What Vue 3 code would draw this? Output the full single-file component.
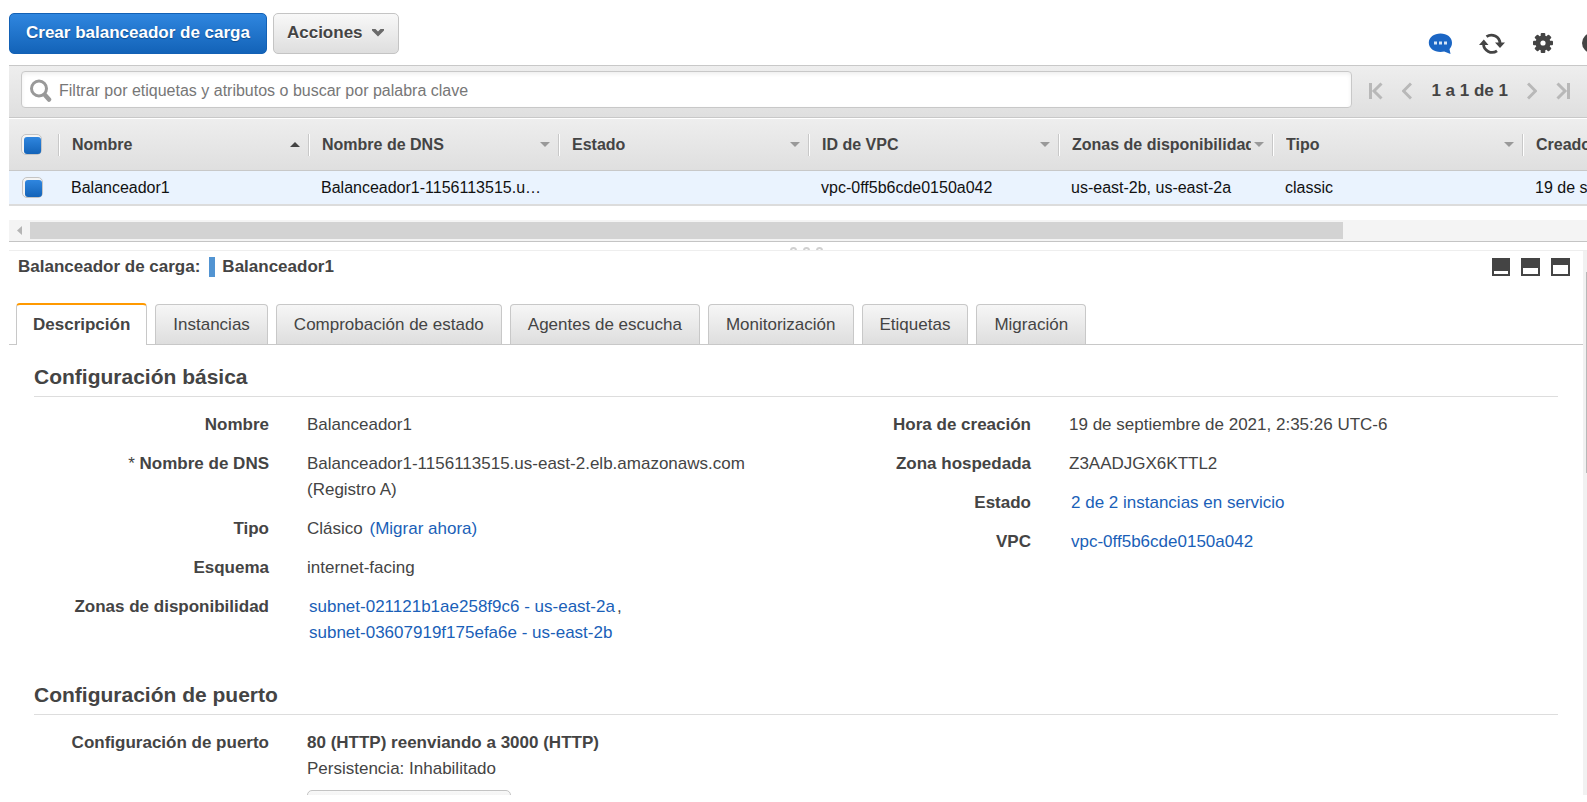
<script setup>
import { ref } from 'vue'

const filter = ref('')
const allSelected = ref(true)
const rowSelected = ref(true)

const columns = [
  { name: 'Nombre', cls: 'c-std', sort: 'up' },
  { name: 'Nombre de DNS', cls: 'c-std', sort: 'down' },
  { name: 'Estado', cls: 'c-std', sort: 'down' },
  { name: 'ID de VPC', cls: 'c-std', sort: 'down' },
  { name: 'Zonas de disponibilidad', cls: 'c-zone', sort: 'down' },
  { name: 'Tipo', cls: 'c-std', sort: 'down' },
  { name: 'Creado', cls: 'c-std', sort: '' },
]
const cells = [
  'Balanceador1',
  'Balanceador1-1156113515.us-east-2.elb.amazonaws.com',
  '',
  'vpc-0ff5b6cde0150a042',
  'us-east-2b, us-east-2a',
  'classic',
  '19 de septiembre de 2021, 2:35:26 UTC-6',
]
const tabs = ['Descripción', 'Instancias', 'Comprobación de estado', 'Agentes de escucha', 'Monitorización', 'Etiquetas', 'Migración']
const active = ref('Descripción')
const teeth = [0, 45, 90, 135]
</script>

<template>
  <div class="page">
    <header class="actions">
      <button class="btn primary" type="button">Crear balanceador de carga</button>
      <button class="btn" type="button">
        Acciones
        <svg width="14" height="10" viewBox="0 0 14 10" aria-hidden="true"><path d="M1 1h3.500L7 3.500 9.500 1H13v1.600L7 8.500 1 2.600z" fill="#6a6a6a" /></svg>
      </button>
      <div class="tools">
        <button type="button" class="icon" aria-label="Comentarios">
          <svg width="26" height="24" viewBox="0 0 26 24">
            <path d="M12.500 1.500C19 1.500 24 5.300 24 10.800c0 2.700-1 4.600-2.500 6.100L22.500 22l-6.300-2.400c-1.200.3-2.400.4-3.700.4C6 20 .8 16.300.8 10.800S6 1.500 12.500 1.500z" fill="#1b66c4" />
            <path d="M6 9.500h3v3H6zM11 9.500h3v3h-3zM16 9.500h3v3h-3z" fill="#d6e5f7" />
          </svg>
        </button>
        <button type="button" class="icon" aria-label="Actualizar">
          <svg width="26" height="24" viewBox="0 0 26 24" fill="none" stroke="#444" stroke-width="2.800">
            <path d="M7.500 4.700A8.600 8.600 0 0 1 21 11.500M18 18.800A8.600 8.600 0 0 1 4.500 12" />
            <path d="M16 10.500h10L21 16zM0 13h9.500L4.800 7.500z" fill="#444" stroke="none" />
          </svg>
        </button>
        <button type="button" class="icon" aria-label="Configuración">
          <svg width="26" height="24" viewBox="-13 -11 26 24">
            <rect v-for="t in teeth" :key="t" x="-2.300" y="-10" width="4.600" height="20" rx="1" fill="#444" :transform="`rotate(${t})`" />
            <circle r="5" fill="none" stroke="#444" stroke-width="5" />
            <circle r="2.600" fill="#fff" />
          </svg>
        </button>
        <button type="button" class="icon" aria-label="Ayuda">
          <svg width="26" height="24" viewBox="0 0 26 24"><circle cx="11" cy="11" r="10" fill="#444" /></svg>
        </button>
      </div>
    </header>

    <div class="filterbar">
      <label class="search">
        <svg width="22" height="24" viewBox="0 0 22 24" fill="none" stroke="#999" aria-hidden="true">
          <circle cx="9" cy="10.500" r="7.500" stroke-width="3" />
          <path d="M15 17l4 4.500" stroke-width="4.500" stroke-linecap="round" />
        </svg>
        <input v-model="filter" type="text" placeholder="Filtrar por etiquetas y atributos o buscar por palabra clave" aria-label="Filtrar" />
      </label>
      <nav class="pager" aria-label="Paginación">
        <button type="button" aria-label="Primera"><svg width="14" height="18" viewBox="0 0 14 18"><path d="M1.500 1v16M12.500 1.500L5 9l7.500 7.500" /></svg></button>
        <button type="button" aria-label="Anterior"><svg width="10" height="18" viewBox="0 0 10 18"><path d="M9 1.500L1.500 9 9 16.500" /></svg></button>
        <span>1 a 1 de 1</span>
        <button type="button" aria-label="Siguiente"><svg width="10" height="18" viewBox="0 0 10 18"><path d="M1 1.500L8.500 9 1 16.500" /></svg></button>
        <button type="button" aria-label="Última"><svg width="14" height="18" viewBox="0 0 14 18"><path d="M12.500 1v16M1.500 1.500L9 9l-7.500 7.500" /></svg></button>
      </nav>
    </div>

    <div class="grid">
      <table>
        <colgroup>
          <col class="c-check" />
          <col v-for="c in columns" :key="c.name" :class="c.cls" />
        </colgroup>
        <thead>
          <tr>
            <th class="check"><input v-model="allSelected" type="checkbox" aria-label="Seleccionar todo" /></th>
            <th v-for="c in columns" :key="c.name">
              <div class="head">
                <span>{{ c.name }}</span>
                <i v-if="c.sort" :class="c.sort"></i>
              </div>
            </th>
          </tr>
        </thead>
        <tbody>
          <tr>
            <td class="check"><input v-model="rowSelected" type="checkbox" aria-label="Seleccionar Balanceador1" /></td>
            <td v-for="(c, i) in cells" :key="i">{{ c }}</td>
          </tr>
        </tbody>
      </table>
    </div>

    <div class="hscroll">
      <svg width="21" height="21" viewBox="0 0 21 21" aria-hidden="true"><path d="M13 6v9l-5-4.500z" fill="#b5b5b5" /></svg>
      <div class="thumb"></div>
    </div>
    <div class="splitter"><i></i><i></i><i></i></div>

    <section class="details">
      <div class="content">
        <div class="titlebar">
          <strong>Balanceador de carga:</strong>
          <span class="mark"></span>
          <strong>Balanceador1</strong>
          <div class="sizes">
            <button type="button" aria-label="Panel pequeño"><svg width="18" height="18" viewBox="0 0 18 18"><path d="M0 0h18v18H0z" fill="#444" /><path d="M2 13h14v3H2z" fill="#fff" /></svg></button>
            <button type="button" aria-label="Panel mediano"><svg width="19" height="18" viewBox="0 0 19 18"><path d="M0 0h19v18H0z" fill="#444" /><path d="M2 10h15v6H2z" fill="#fff" /></svg></button>
            <button type="button" aria-label="Panel grande"><svg width="19" height="18" viewBox="0 0 19 18"><path d="M0 0h19v18H0z" fill="#444" /><path d="M2 7h15v9H2z" fill="#fff" /></svg></button>
          </div>
        </div>

        <div class="tabs" role="tablist">
          <button v-for="t in tabs" :key="t" type="button" role="tab" :aria-selected="t === active" :class="{ on: t === active }" @click="active = t">{{ t }}</button>
        </div>

        <div class="body">
          <h2>Configuración básica</h2>
          <div class="cols">
            <dl>
              <dt>Nombre</dt><dd>Balanceador1</dd>
              <dt><span class="star">*</span> Nombre de DNS</dt><dd>Balanceador1-1156113515.us-east-2.elb.amazonaws.com<br />(Registro A)</dd>
              <dt>Tipo</dt><dd>Clásico <a href="#">(Migrar ahora)</a></dd>
              <dt>Esquema</dt><dd>internet-facing</dd>
              <dt>Zonas de disponibilidad</dt>
              <dd><a href="#">subnet-021121b1ae258f9c6 - us-east-2a</a>,<br /><a href="#">subnet-03607919f175efa6e - us-east-2b</a></dd>
            </dl>
            <dl>
              <dt>Hora de creación</dt><dd>19 de septiembre de 2021, 2:35:26 UTC-6</dd>
              <dt>Zona hospedada</dt><dd>Z3AADJGX6KTTL2</dd>
              <dt>Estado</dt><dd><a href="#">2 de 2 instancias en servicio</a></dd>
              <dt>VPC</dt><dd><a href="#">vpc-0ff5b6cde0150a042</a></dd>
            </dl>
          </div>
          <h2 class="second">Configuración de puerto</h2>
          <dl>
            <dt>Configuración de puerto</dt>
            <dd><b>80 (HTTP) reenviando a 3000 (HTTP)</b><br />Persistencia: Inhabilitado
              <button type="button" class="edit" aria-label="Editar persistencia"></button>
            </dd>
          </dl>
        </div>
      </div>
      <div class="vscroll"><div></div></div>
    </section>
  </div>
</template>

<style>
html, body { background: #fff; overflow: hidden; }
</style>

<style scoped>
* { box-sizing: border-box; }
.page {
  display: flex;
  flex-direction: column;
  height: 100vh;
  padding: 0 0 7px 9px;
  overflow: hidden;
  color: #444;
  font: 17px/26px "Liberation Sans", Arial, sans-serif;
}
button { font: inherit; color: inherit; cursor: pointer; }
.actions { flex: none; display: flex; gap: 6px; height: 65px; padding-top: 13px; overflow: hidden; }
.btn {
  display: flex;
  align-items: center;
  gap: 8px;
  height: 41px;
  padding: 0 13px 1px;
  border: 1px solid #c4c4c4;
  border-radius: 5px;
  background: linear-gradient(#f8f8f8, #dedede);
  font-weight: bold;
  text-shadow: 0 1px 0 #fff;
}
.btn.primary {
  padding: 0 16px 1px;
  border-color: #1361b5;
  background: linear-gradient(#2f86df, #1363b8);
  color: #fff;
  text-shadow: 0 1px 1px #0d4a8c;
}
.tools { display: flex; gap: 25px; margin: 19px -20px 0 auto; }
.icon { width: 26px; height: 24px; padding: 0; border: 0; background: none; }
svg { display: block; flex: none; }

.filterbar {
  flex: none;
  display: flex;
  height: 53px;
  padding: 5px 17px 0 12px;
  border-top: 1px solid #c8c8c8;
  border-bottom: 1px solid #c8c8c8;
  background: linear-gradient(#eee, #dfdfdf);
}
.search {
  flex: 1;
  display: flex;
  align-items: center;
  gap: 7px;
  height: 37px;
  padding-left: 8px;
  border: 1px solid #c8c8c8;
  border-radius: 4px;
  background: #fff;
  box-shadow: inset 0 2px 4px #eee;
}
.search input { flex: 1; height: 32px; padding: 2px 0 0; border: 0; outline: 0; background: none; font: inherit; font-size: 16px; }
.search input::placeholder { color: #777; opacity: 1; }
.pager { display: flex; align-items: center; height: 40px; margin-left: 17px; gap: 19px; font-weight: bold; }
.pager button { padding: 0; border: 0; background: none; }
.pager svg { fill: none; stroke: #b8b8b8; stroke-width: 3; }

.grid { flex: none; overflow: hidden; }
table { width: 1763px; table-layout: fixed; border-collapse: separate; border-spacing: 0; font-size: 16px; }
.c-check { width: 49px; }
.c-std { width: 250px; }
.c-zone { width: 214px; }
th { height: 53px; padding: 0; border-bottom: 1px solid #c8c8c8; border-top: 1px solid #fff; background: linear-gradient(#eee, #dfdfdf); text-align: left; }
td { height: 35px; padding: 0 13px; border-bottom: 2px solid #dcdcdc; background: #eaf3fe; color: #111; line-height: 24px; overflow: hidden; text-overflow: ellipsis; white-space: nowrap; }
.head { display: flex; align-items: center; height: 22px; padding: 0 8px 0 13px; border-left: 1px solid #c8c8c8; box-shadow: inset 1px 0 #fff; }
.head span { flex: 1; overflow: hidden; white-space: nowrap; }
.head i { flex: none; width: 10px; height: 5px; margin-left: 3px; background: #999; clip-path: polygon(0 0, 100% 0, 50% 100%); }
.head i.up { background: #444; clip-path: polygon(50% 0, 100% 100%, 0 100%); }
.check, td.check { padding: 0 0 0 12px; line-height: 0; }
td.check { padding-left: 13px; }
.check input {
  appearance: none;
  position: relative;
  width: 21px;
  height: 21px;
  margin: 0;
  border: 1px solid #c4c4c4;
  border-radius: 5px;
  background: #f4f4f4;
}
.check input:checked::after {
  content: "";
  position: absolute;
  inset: 2px 0 0 2px;
  border-radius: 3px;
  background: linear-gradient(#2f86df, #1363b8);
}

.hscroll { flex: none; display: flex; height: 22px; margin-top: 14px; border-bottom: 1px solid #c4c4c4; background: #f4f4f4; }
.thumb { width: 83.2%; margin: 2px 0; background: #d3d3d3; }
.splitter { flex: none; display: flex; justify-content: center; gap: 6px; height: 9px; padding: 5px 0 0 16px; border-bottom: 1px solid #eee; overflow: hidden; }
.splitter i { width: 7px; height: 8px; border: 2px solid #d0d0d0; border-radius: 4px; }

.details { flex: 1; display: flex; min-height: 0; overflow: hidden; }
.content { flex: 1; min-width: 0; }
.vscroll { flex: none; width: 4px; background: #f1f1f1; }
.vscroll div { height: 201px; margin: 21px 0 0 3px; background: #b8b8b8; }
.titlebar { display: flex; align-items: center; height: 32px; padding: 0 13px 0 9px; }
.mark { width: 6px; height: 20px; margin: 0 7px 0 9px; background: #5294d2; }
.sizes { display: flex; gap: 11px; margin-left: auto; }
.sizes button { padding: 0; border: 0; background: none; }

.tabs { display: flex; align-items: flex-end; gap: 8px; height: 62px; padding-left: 7px; border-bottom: 1px solid #c8c8c8; }
.tabs button {
  height: 40px;
  padding: 0 17px;
  border: 1px solid #c8c8c8;
  border-bottom: 0;
  border-radius: 4px 4px 0 0;
  background: linear-gradient(#f6f6f6, #dedede);
  white-space: nowrap;
}
.tabs .on { height: 42px; margin-bottom: -1px; padding: 0 16px 1px; border-top: 2px solid #f90; background: #fff; font-weight: bold; }

.body { padding: 16px 25px 0; }
h2 { margin: 0; height: 36px; border-bottom: 1px solid #ddd; font-size: 21px; line-height: 32px; }
h2.second { margin-top: 33px; }
.cols { display: grid; grid-template-columns: 1fr 1fr; }
dl { display: grid; grid-template-columns: 235px 1fr; gap: 13px 38px; margin: 0; padding-top: 15px; align-content: start; }
dt { font-weight: bold; text-align: right; }
dd { margin: 0; }
.star { font-weight: normal; }
a { margin: 0 2px; color: #1a5fb8; text-decoration: none; }
.edit { display: block; width: 204px; height: 36px; margin-top: 8px; border: 1px solid #c4c4c4; border-radius: 5px; background: linear-gradient(#f8f8f8, #dedede); }
</style>
